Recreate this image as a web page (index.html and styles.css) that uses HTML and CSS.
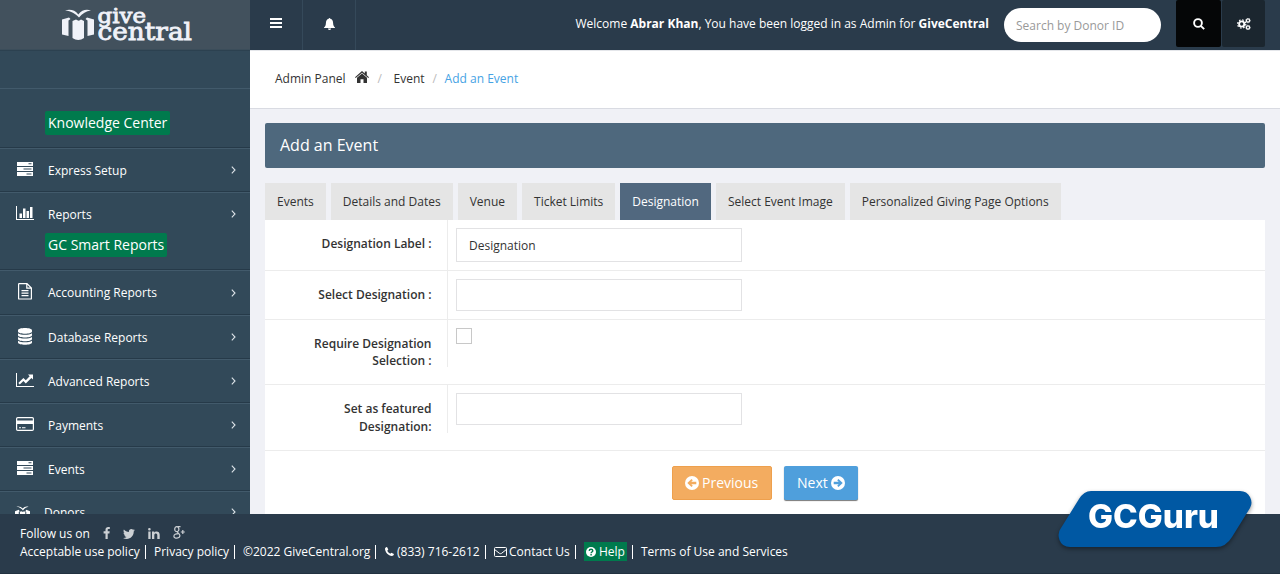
FILE: index.html
```html
<!DOCTYPE html>
<html lang="en">
<head>
<meta charset="utf-8">
<title>Add an Event</title>
<link rel="stylesheet" href="styles.css">
</head>
<body>
<svg width="0" height="0" class="defs">
  <symbol id="server" viewBox="0 0 16 14"><path fill="currentColor" fill-rule="evenodd" d="M0 0h16v4H0zM11.5 1.3v1h3v-1zM0 5h16v4H0zM6.5 6.5v1h8v-1zM0 10h16v4H0zM9.5 11.5v1h5v-1z"/></symbol>
  <symbol id="caret" viewBox="0 0 5 8"><path d="M.8.7 4 4 .8 7.3" fill="none" stroke="currentColor" stroke-width="1.1"/></symbol>
</svg>
<header class="topbar">
  <div class="brand">
    <svg width="134" height="40" viewBox="61 4 134 40" class="logo">
      <path d="M65 10.500c5-1.500 10-.5 13.300 4C82 10 86 9 91 10.500c-5 .8-8.500 3-12 7-4-4-7.500-6.500-14-7zM62 19.500l7-2 1.500 1.500-2 1.500v15.500L62 34.500zM94 19.500l-7-2-1.500 1.500 2 1.500v15.500l6.500-1.500zM72.500 21l3.500-1.500c2 1.500 3.500 1.500 5 0l3 1.500V38c-3.500 2.500-8 2.500-11.500 0z"/>
      <text x="97.500" y="23" font-size="20.500" textLength="48.500" lengthAdjust="spacingAndGlyphs">give</text>
      <text x="97.500" y="39.500" font-size="23.500" textLength="94.500" lengthAdjust="spacingAndGlyphs">central</text>
    </svg>
  </div>
  <div class="tool"><svg width="12" height="10"><path d="M0 1h12M0 5h12M0 9h12" stroke="#fff" stroke-width="2"/></svg></div>
  <div class="tool bell"><svg width="11" height="12" viewBox="0 0 11 12"><path fill="#fff" d="M5.500 0c.5 0 .8.400.8.800C8.300 1.300 9 2.700 9.100 5c0 2.400.8 3.500 1.900 4.500V10H0v-.5C1.200 8.500 1.900 7.400 1.900 5 2 2.700 2.800 1.300 4.700.8c0-.4.3-.8.8-.8zM4 10.500h3a1.500 1.500 0 0 1-3 0z"/></svg></div>
  <div class="welcome">Welcome <b>Abrar Khan</b>, You have been logged in as Admin for <b>GiveCentral</b></div>
  <div class="search">Search by Donor ID</div>
  <div class="sq find"><svg width="12" height="12" viewBox="0 0 12 12" fill="none" stroke="#fff" stroke-width="1.900"><circle cx="5" cy="5" r="3.900"/><path d="m7.800 7.800 3.400 3.400"/></svg></div>
  <div class="sq gear"><svg width="14" height="12" viewBox="0 0 14 12" fill="none" stroke="#fff"><circle cx="4.700" cy="6" r="2.600" stroke-width="1.900"/><circle cx="4.700" cy="6" r="4.100" stroke-width="1.200" stroke-dasharray="1.600 1.620"/><circle cx="11" cy="2.500" r="1.600" stroke-width="1.300"/><circle cx="11" cy="2.500" r="2.300" stroke-width=".6" stroke-dasharray="1 .8"/><circle cx="11" cy="9.500" r="1.600" stroke-width="1.300"/><circle cx="11" cy="9.500" r="2.300" stroke-width=".6" stroke-dasharray="1 .8"/></svg></div>
</header>

<div class="body">
  <nav class="side">
    <div class="blank"></div>
    <div class="item kc"><span class="tag">Knowledge Center</span></div>
    <div class="item"><div class="row"><svg class="ic" width="16" height="14"><use href="#server"/></svg><span>Express Setup</span><svg class="car" width="5" height="8"><use href="#caret"/></svg></div></div>
    <div class="item reports"><div class="row"><svg class="ic" width="18" height="14" viewBox="0 0 18 14"><path fill="#fff" d="M0 0h1v13h17v1H0zM3.500 7.500H6V12H3.500zM7 2.500h2.500V12H7zM10.500 5H13v7h-2.500zM14 1h2.500v11H14z"/></svg><span>Reports</span><svg class="car" width="5" height="8"><use href="#caret"/></svg></div><span class="tag">GC Smart Reports</span></div>
    <div class="item tall"><div class="row"><svg class="ic" width="14" height="17" viewBox="0 0 14 17"><path fill="none" stroke="#fff" stroke-width="1.200" d="M.6 1.200Q.6.600 1.200.6H9l4.400 4.400v10.400q0 .6-.6.600H1.200q-.6 0-.6-.6zM8.800.8V5.200h4.500M3.500 7.700h7M3.500 10.200h7M3.500 12.700h7"/></svg><span>Accounting Reports</span><svg class="car" width="5" height="8"><use href="#caret"/></svg></div></div>
    <div class="item"><div class="row"><svg class="ic" width="14" height="17" viewBox="0 0 14 17"><path fill="#fff" d="M0 2.500C0-.7 14-.7 14 2.500v1c0 3-14 3-14 0zM0 5.200c3 2 11 2 14 0v2c0 3-14 3-14 0zM0 9c3 2 11 2 14 0v2c0 3-14 3-14 0zM0 12.800c3 2 11 2 14 0v1.700c0 3-14 3-14 0z"/></svg><span>Database Reports</span><svg class="car" width="5" height="8"><use href="#caret"/></svg></div></div>
    <div class="item"><div class="row"><svg class="ic" width="18" height="14" viewBox="0 0 18 14"><path fill="#fff" d="M0 0h1v13h17v1H0zM12 1.500h5v5l-1.600-1.600L9.800 10.400 7.400 8 3.800 11.600 2.300 10l5.100-5.100 2.400 2.400 3.900-4z"/></svg><span>Advanced Reports</span><svg class="car" width="5" height="8"><use href="#caret"/></svg></div></div>
    <div class="item"><div class="row"><svg class="ic" width="18" height="14" viewBox="0 0 18 14"><rect x=".6" y=".6" width="16.800" height="12.800" rx="1.200" fill="none" stroke="#fff" stroke-width="1.200"/><path fill="#fff" d="M1 3.500h16v3.500H1zM3 10.300h2v1H3zM6 10.300h3.500v1H6z"/></svg><span>Payments</span><svg class="car" width="5" height="8"><use href="#caret"/></svg></div></div>
    <div class="item"><div class="row"><svg class="ic" width="16" height="14"><use href="#server"/></svg><span>Events</span><svg class="car" width="5" height="8"><use href="#caret"/></svg></div></div>
    <div class="item donors"><div class="row"><svg class="ic" width="15" height="15" viewBox="62 9 32 30"><path fill="#fff" d="M65 9.500c5-1.500 10-.5 13.300 4C82 9 86 8 91 9.500c-5 .8-8.500 3-12 8-4-5-7.500-7.500-14-8zM62 19l8-3 2 3-2 2v15L62 34zM94 19l-8-3-2 3 2 2v15l8-2zM72.500 20.500l3.500-1.500c2 1.500 3.500 1.500 5 0l3 1.500V38c-3.500 2.500-8 2.500-11.500 0z"/></svg><span>Donors</span><svg class="car" width="5" height="8"><use href="#caret"/></svg></div></div>
  </nav>

  <main class="main">
    <div class="crumbs"><span>Admin Panel</span><svg class="home" width="14" height="12" viewBox="0 0 14 12"><path fill="#333" d="M7 0l2.800 2.400V.600h2v3.600L14 6.200l-.7.800L7 1.700.7 7 0 6.200zM7 2.500l5 4.200V12H8.500V8.300h-3V12H2V6.700z"/></svg><i>/</i><span class="ev">Event</span><i>/</i><span class="cur">Add an Event</span></div>
    <div class="content">
      <h1>Add an Event</h1>
      <div class="tabs">
        <span>Events</span><span>Details and Dates</span><span>Venue</span><span>Ticket Limits</span><span class="on">Designation</span><span>Select Event Image</span><span>Personalized Giving Page Options</span>
      </div>
      <div class="form">
        <div class="frow r1"><label>Designation Label :</label><div class="cell"><div class="input">Designation</div></div></div>
        <div class="frow r2"><label>Select Designation :</label><div class="cell"><div class="input low"></div></div></div>
        <div class="frow r3"><label>Require Designation<br>Selection :</label><div class="cell"><div class="check"></div></div></div>
        <div class="frow r4"><label>Set as featured<br>Designation:</label><div class="cell"><div class="input low"></div></div></div>
        <div class="actions">
          <div class="btn prev"><svg width="14" height="14" viewBox="0 0 14 14"><circle cx="7" cy="7" r="7" fill="#fff"/><path fill="#f3ac60" d="M2.300 7 6.500 2.900l1.300 1.300L6.300 5.800h5v2.400h-5l1.500 1.600-1.300 1.300z"/></svg><span>Previous</span></div>
          <div class="btn next"><span>Next</span><svg width="14" height="14" viewBox="0 0 14 14"><circle cx="7" cy="7" r="7" fill="#fff"/><path fill="#4f9fdc" d="M11.700 7 7.500 2.900 6.200 4.200l1.500 1.600h-5v2.400h5L6.200 9.800l1.300 1.300z"/></svg></div>
        </div>
      </div>
    </div>
  </main>
</div>

<footer class="foot">
  <div class="follow"><span>Follow us on</span>
    <svg class="fb" width="7" height="12" viewBox="0 0 7 12"><path d="M6.800.1V2H5.700c-.9 0-1 .4-1 1v1.300h2l-.3 2.100H4.700V12H2.500V6.400H.6V4.300h1.900V2.700C2.500.9 3.600 0 5.200 0z"/></svg>
    <svg class="tw" width="12" height="10" viewBox="0 0 12 10"><path d="M12 1.200 10.700 2.500C10.900 6.500 7.800 10 3.800 10A7 7 0 0 1 0 8.900c1.300.1 2.600-.2 3.600-1C2.500 7.800 1.700 7.100 1.400 6.200h1C1.300 5.900.5 4.900.5 3.700l1.100.3C.5 3.200.2 1.800.9.600 2.100 2 3.900 3 6 3.100 5.500 1.300 6.800 0 8.300 0c.7 0 1.300.3 1.800.8L11.600.200 10.600 1.500z"/></svg>
    <svg class="li" width="12" height="11" viewBox="0 0 12 11"><path d="M.3 3.600h2.300V11H.3zM1.400 0a1.300 1.300 0 1 1 0 2.600 1.300 1.300 0 0 1 0-2.600zM4 3.600h2.300v1C6.800 3.800 7.500 3.400 8.600 3.400c1.900 0 3.100 1.200 3.100 3.400V11H9.300V7.200c0-1.100-.4-1.800-1.400-1.800S6.300 6.100 6.300 7V11H4z"/></svg>
    <svg class="gp" width="12" height="13" viewBox="0 0 12 13"><g fill="none" stroke="#ccd0d4" stroke-width="1.200"><ellipse cx="3.800" cy="3.200" rx="2.100" ry="2.500"/><path d="M7.500.6H4.500M5 5.700c-1.500 1 1.900 1.700 1.900 3.900 0 3.300-6 3.200-6 .6 0-1.700 2-2.500 4.500-2.500M9.800 4v4M7.800 6h4"/></g></svg>
  </div>
  <div class="links">
    <span>Acceptable use policy</span><span>Privacy policy</span><span>©2022 GiveCentral.org</span>
    <span><svg width="9" height="9" viewBox="0 0 9 9"><path fill="#fff" d="M2 .1 3.300 2.600 2.300 3.800c.7 1.400 1.500 2.200 2.900 2.900L6.400 5.700 8.900 7C9 8.300 7.800 9 6.900 9 3.300 8.600.4 5.700 0 2.100 0 1.200.7 0 2 .1z"/></svg>(833) 716-2612</span>
    <span><svg width="13" height="10" viewBox="0 0 13 10" class="mail"><path fill="none" stroke="#fff" d="M.5 1.500q0-1 1-1h10q1 0 1 1v7q0 1-1 1h-10q-1 0-1-1zM.6 2.500l4.800 3.800q1.100.8 2.200 0l4.800-3.800"/></svg>Contact Us</span>
    <span><em><svg width="10" height="10" viewBox="0 0 10 10"><circle cx="5" cy="5" r="5" fill="#fff"/><path d="M3.200 3.900C3.300 1.700 6.800 1.800 6.800 3.800 6.800 5 5.100 5 5.100 6.200M5.100 7v1.400" fill="none" stroke="#007a4d" stroke-width="1.400"/></svg>Help</em></span>
    <span>Terms of Use and Services</span>
  </div>
</footer>
<svg class="guru" width="210" height="72" viewBox="1050 482 210 72">
  <path d="M1091 491H1240Q1247 491 1250 497T1250 508L1232 537Q1226 547 1216 547H1070Q1062 547 1059.500 540T1061 528L1079 499Q1084 491 1091 491Z"/>
  <text x="1088" y="528" textLength="131" lengthAdjust="spacingAndGlyphs">GCGuru</text>
</svg>
</body>
</html>
```
FILE: styles.css
```css
* { box-sizing: border-box; }
body { margin: 0; width: 1280px; height: 574px; overflow: hidden; position: relative; display: flex; flex-direction: column; font: 12px/18px "Open Sans", sans-serif; color: #333; background: #f0f1f6; }
svg { flex: none; display: block; }
.defs { position: absolute; }
.topbar { height: 50px; flex: none; display: flex; background: #2a3b4b; color: #fff; }
.brand { width: 250px; background: #42515d; padding: 4px 0 0 61px; border-bottom: 1px solid #3b4d5a; }
.logo { fill: #f0f2f8; font-family: "DejaVu Serif", serif; overflow: visible; }
.logo text { stroke: #f0f2f8; stroke-width: .8; }
.tool { width: 53px; padding: 18px 0 0 20px; border-right: 1px solid #35495a; }
.bell { padding-left: 21px; }
.welcome { margin-left: auto; padding-top: 15px; white-space: nowrap; }
.search { width: 157px; height: 34px; margin: 8px 15px 0 15px; border-radius: 17px; background: #fff; color: #999; padding: 9px 12px; }
.sq { height: 47px; padding-top: 18px; border-radius: 2px; }
.find { width: 45px; background: #050607; padding-left: 17px; margin-right: 1px; }
.gear { width: 43px; background: #1b262f; padding-left: 15px; margin-right: 15px; }
.body { height: 464px; flex: none; display: flex; overflow: hidden; }
.side { width: 250px; flex: none; background: #324959; color: #fff; border-top: 1px solid #2c4150; }
.blank { height: 37px; }
.item { height: 44px; border-top: 1px solid #425a6b; border-bottom: 1px solid #263a49; }
.kc { height: 60px; padding: 22px 0 0 45px; }
.reports { height: 78px; }
.reports .tag { margin: -2px 0 0 45px; }
.tall { height: 45px; }
.tall .row { height: 43px; }
.row { height: 42px; padding: 1px 14px 0 0; display: grid; grid-template-columns: 48px 1fr 5px; align-items: center; }
.row .ic { justify-self: center; margin: -3px 0 0 1px; }
.car { color: #dde3e8; margin-top: -1px; }
.donors .row { height: 40px; grid-template-columns: 44px 1fr 5px; }
.donors .ic { margin: 2px 0 0; }
.tag { display: inline-block; height: 24px; padding: 0 3px; border-radius: 2px; background: #007a4d; font-size: 14px; line-height: 23px; white-space: nowrap; vertical-align: top; }
.main { flex: 1; }
.crumbs { height: 59px; background: #fff; border-top: 1px solid #e4e6ea; border-bottom: 1px solid #d9dbe2; display: flex; padding: 19px 0 0 25px; }
.crumbs i { color: #bbb; font-style: normal; width: 5px; }
.home { margin: 1px 9px 0 9px; }
.ev { margin: 0 8px 0 11px; }
.crumbs .cur { color: #46a3e4; margin-left: 7px; }
.content { padding: 14px 15px 0; }
h1 { margin: 0; height: 45px; padding: 0 15px; border-radius: 2px; background: #4e687d; color: #fff; font-size: 16px; font-weight: 400; line-height: 44px; }
.tabs { display: flex; gap: 5px; margin-top: 15px; }
.tabs span { height: 37px; padding: 10px 12px 0; background: #e5e5e5; white-space: nowrap; }
.tabs .on { background: #51687f; color: #fff; }
.form { background: #fff; height: 300px; }
.frow { display: flex; align-items: flex-start; border-bottom: 1px solid #ececec; }
.frow label { width: 182px; padding: 15px 15.500px 0 0; text-align: right; font-weight: 600; line-height: 17.500px; }
.r3 label { line-height: 17px; }
.cell { border-left: 1px solid #ececec; padding: 8px 0 0 8px; height: 50px; }
.r1 { height: 51px; }
.r2 { height: 49px; }
.r3 { height: 65px; }
.r3 .cell { height: 47px; }
.r4 { height: 66px; }
.r4 .cell { height: 48px; }
.r2 .cell { height: 48px; }
.input { width: 286px; height: 34px; border: 1px solid #e2e2e4; padding: 8px 12px; }
.low { height: 32px; }
.check { width: 16px; height: 16px; border: 1px solid #c8c8c8; }
.actions { display: flex; padding: 15px 0 0 407px; gap: 12px; }
.btn { height: 34px; display: flex; align-items: center; color: #fff; font-size: 14px; border-radius: 2px; white-space: nowrap; }
.prev { width: 100px; background: #f3ac60; border: 1px solid #eea04d; padding-left: 12px; gap: 3px; }
.next { width: 74px; background: #4f9fdc; padding-left: 13px; gap: 3px; box-shadow: 0 1px 1px #777; }
.foot { height: 60px; flex: none; background: #2a3b4b; border-bottom: 1px solid #223140; color: #fff; padding: 11px 0 0 20px; }
.follow { display: flex; height: 18px; fill: #ccd0d4; }
.fb { margin: 2px 0 0 13px; }
.tw { margin: 4px 0 0 13px; }
.li { margin: 3px 0 0 13px; }
.gp { margin: 1px 0 0 13px; }
.links { display: grid; grid-template-columns: 126px 89px 141px 110px 90px 57px 160px; white-space: nowrap; padding-top: 2px; }
.links > span { height: 14px; line-height: 13px; border-right: 1px solid #fff; padding-left: 8px; display: flex; }
.links > span:first-child { padding-left: 0; }
.links > span:last-child { border: 0; }
.links svg { margin: 2px 3px 0 0; }
.links > span:nth-child(4) { padding-left: 9px; }
.links .mail { margin: 2px 2px 0 0; }
.links em { font-style: normal; background: #007a4d; display: flex; width: 43px; height: 19px; margin-top: -3px; padding: 3px 0 0 2px; }
.links em svg { margin: 2px 3px 0 0; }
.guru { position: absolute; left: 1050px; top: 482px; filter: drop-shadow(0 2px 2px rgba(0,0,0,.4)); }
.guru path { fill: #0058a3; }
.guru text { fill: #fff; font: 800 32px Inter, sans-serif; }
```
